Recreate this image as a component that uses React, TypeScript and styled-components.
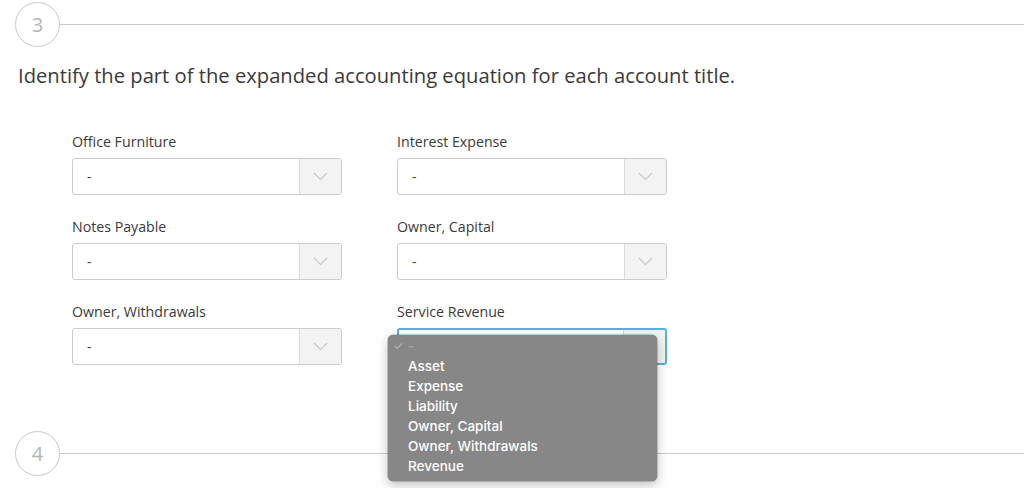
import React from "react";
import styled, { createGlobalStyle } from "styled-components";

const Global = createGlobalStyle`
  html, body { margin: 0; padding: 0; background: #fff; }
  body { font-family: "Open Sans", "Liberation Sans", sans-serif; color: #333; width: 1024px; height: 488px; overflow: hidden; }
`;

const Page = styled.div`
  position: relative;
  width: 1024px;
  height: 488px;
  display: flex;
  flex-direction: column;
`;

const StepRow = styled.div<{ $top: number }>`
  display: flex;
  align-items: center;
  margin-top: ${(p) => p.$top}px;
  padding-left: 15px;
`;

const StepCircle = styled.div`
  width: 45px;
  height: 45px;
  box-sizing: border-box;
  border: 1.5px solid #c9c9c9;
  border-radius: 50%;
  display: flex;
  align-items: center;
  justify-content: center;
  font-size: 20px;
  color: #b5b5b5;
  flex: none;
`;

const StepLine = styled.div`
  flex: 1;
  height: 1px;
  background: #c9c9c9;
`;

const Question = styled.div`
  margin: 15px 0 0 18px;
  font-size: 20.2px;
  line-height: 26px;
  color: #3a3a3a;
`;

const Grid = styled.div`
  display: grid;
  grid-template-columns: 270px 270px;
  column-gap: 55px;
  row-gap: 22px;
  margin: 44px 0 0 72px;
`;

const Field = styled.div`
  display: flex;
  flex-direction: column;
`;

const Label = styled.div`
  font-size: 14.2px;
  line-height: 20px;
  color: #3a3a3a;
  margin-bottom: 6px;
`;

const SelectBox = styled.div<{ $focused?: boolean }>`
  position: relative;
  height: 37px;
  box-sizing: border-box;
  border: ${(p) => (p.$focused ? "2px solid #55b1dd" : "1px solid #cbcbcb")};
  border-radius: 3px;
  display: flex;
  background: #fff;
`;

const SelectValue = styled.div`
  flex: 1;
  display: flex;
  align-items: center;
  padding-left: 14px;
  font-size: 14px;
  color: #444;
`;

const ArrowCell = styled.div`
  width: 41px;
  flex: none;
  border-left: 1px solid #dcdcdc;
  background: #f3f3f3;
  display: flex;
  align-items: center;
  justify-content: center;
  border-radius: 0 2px 2px 0;
`;

const Menu = styled.div`
  position: absolute;
  left: -11px;
  top: 5px;
  width: 269px;
  box-sizing: border-box;
  padding: 1px 0 5px;
  background: #878787;
  border-radius: 5px;
  box-shadow: 0 0 0 0.5px rgba(0, 0, 0, 0.35), 0 4px 12px rgba(0, 0, 0, 0.25);
  z-index: 5;
  font-family: "Inter", "Liberation Sans", sans-serif;
`;

const MenuItem = styled.div<{ $muted?: boolean }>`
  position: relative;
  height: 20px;
  line-height: 20px;
  padding-left: 20px;
  font-size: 13.5px;
  font-weight: 500;
  color: ${(p) => (p.$muted ? "#a9a9a9" : "#fff")};
`;

const Check = styled.span`
  position: absolute;
  left: 5px;
  top: 0;
  font-size: 12px;
  color: #b0b0b0;
`;

const Chevron = () => (
  <svg width="15" height="9" viewBox="0 0 15 9">
    <path d="M1 1 L7.5 7.5 L14 1" fill="none" stroke="#c8c8c8" strokeWidth="1.2" />
  </svg>
);

const fields = [
  "Office Furniture",
  "Interest Expense",
  "Notes Payable",
  "Owner, Capital",
  "Owner, Withdrawals",
  "Service Revenue",
];

const options = ["Asset", "Expense", "Liability", "Owner, Capital", "Owner, Withdrawals", "Revenue"];

export default function App() {
  return (
    <Page>
      <Global />
      <StepRow $top={2}>
        <StepCircle>3</StepCircle>
        <StepLine />
      </StepRow>
      <Question>Identify the part of the expanded accounting equation for each account title.</Question>
      <Grid>
        {fields.map((f, i) => {
          const focused = i === fields.length - 1;
          return (
            <Field key={f}>
              <Label>{f}</Label>
              <SelectBox $focused={focused}>
                <SelectValue>{focused ? "" : "-"}</SelectValue>
                <ArrowCell>
                  <Chevron />
                </ArrowCell>
                {focused && (
                  <Menu>
                    <MenuItem $muted>
                      <Check>✓</Check>-
                    </MenuItem>
                    {options.map((o) => (
                      <MenuItem key={o}>{o}</MenuItem>
                    ))}
                  </Menu>
                )}
              </SelectBox>
            </Field>
          );
        })}
      </Grid>
      <StepRow $top={66}>
        <StepCircle>4</StepCircle>
        <StepLine />
      </StepRow>
    </Page>
  );
}
